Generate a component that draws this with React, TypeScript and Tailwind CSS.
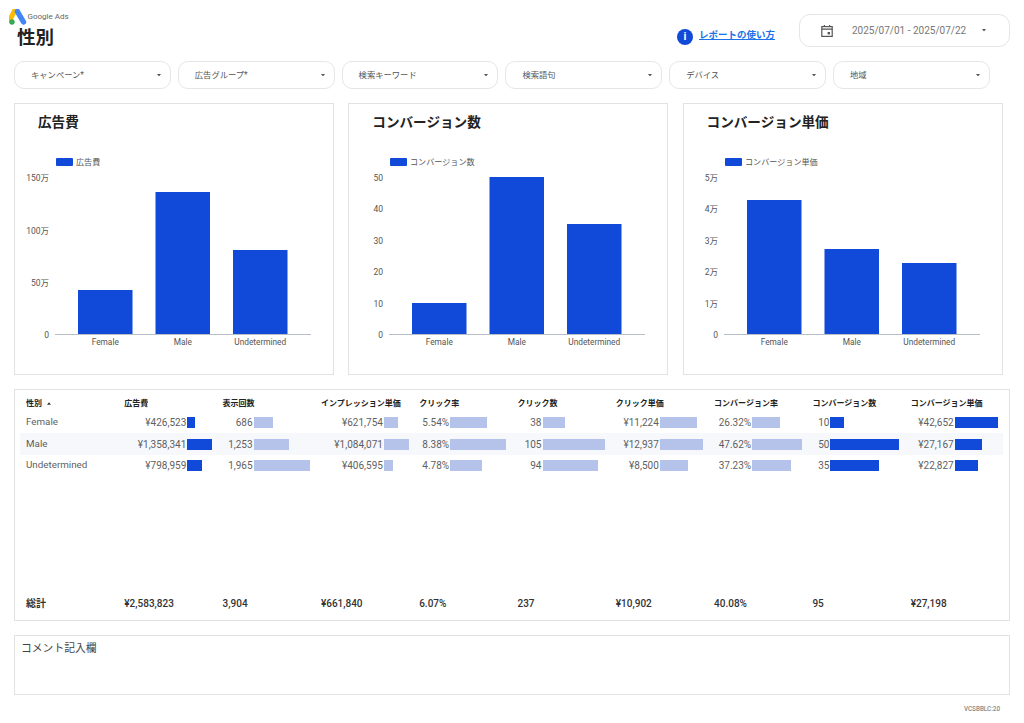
const filters = ["キャンペーン*", "広告グループ*", "検索キーワード", "検索語句", "デバイス", "地域"];

const Caret = () => (
  <svg width="4" height="2.5" viewBox="0 0 5 3" className="shrink-0">
    <path d="M0 0h5L2.5 3z" fill="#555" />
  </svg>
);

type ChartProps = {
  title: string;
  ticks: [string, number][];
  tops: number[];
};

const names = ["Female", "Male", "Undetermined"];
const barX = [64, 141.5, 219];

function Chart({ title, ticks, tops }: ChartProps) {
  return (
    <div className="w-[320px] h-[272px] border border-[#e2e2e2] bg-white">
      <div className="pl-[23px] pt-[8px] h-[46px] text-[13.6px] leading-[20px] font-bold text-[#222]">{title}</div>
      <svg width="318" height="224" viewBox="1 0 318 224" className="block">
        <rect x="42" y="8" width="17" height="8" rx="1" fill="#1149d9" />
        <text x="62" y="15" fontSize="8.1" fill="#555">{title}</text>
        {ticks.map(([label, y]) => (
          <text key={label} x="35" y={y - 150 + 4} fontSize="8.5" fill="#555" textAnchor="end">{label}</text>
        ))}
        {tops.map((top, i) => (
          <rect key={names[i]} x={barX[i]} y={top - 150} width="54.5" height={334 - top} fill="#1149d9" />
        ))}
        <line x1="41" x2="297" y1="184.5" y2="184.5" stroke="#b8bec8" strokeWidth="1" />
        {names.map((n, i) => (
          <text key={n} x={barX[i] + 27.25} y="195" fontSize="8.3" fill="#555" textAnchor="middle">{n}</text>
        ))}
      </svg>
    </div>
  );
}

type Col = {
  head: string;
  textW: string;
  dark: boolean;
  barMax: number;
  nums: number[];
  vals: string[];
  total: string;
};

const cols: Col[] = [
  { head: "広告費", textW: "w-[63px]", dark: true, barMax: 25, nums: [426523, 1358341, 798959], vals: ["¥426,523", "¥1,358,341", "¥798,959"], total: "¥2,583,823" },
  { head: "表示回数", textW: "w-[31px]", dark: false, barMax: 56, nums: [686, 1253, 1965], vals: ["686", "1,253", "1,965"], total: "3,904" },
  { head: "インプレッション単価", textW: "w-[63px]", dark: false, barMax: 25, nums: [621754, 1084071, 406595], vals: ["¥621,754", "¥1,084,071", "¥406,595"], total: "¥661,840" },
  { head: "クリック率", textW: "w-[31px]", dark: false, barMax: 56, nums: [5.54, 8.38, 4.78], vals: ["5.54%", "8.38%", "4.78%"], total: "6.07%" },
  { head: "クリック数", textW: "w-[25px]", dark: false, barMax: 62, nums: [38, 105, 94], vals: ["38", "105", "94"], total: "237" },
  { head: "クリック単価", textW: "w-[44px]", dark: false, barMax: 43, nums: [11224, 12937, 8500], vals: ["¥11,224", "¥12,937", "¥8,500"], total: "¥10,902" },
  { head: "コンバージョン率", textW: "w-[38px]", dark: false, barMax: 50, nums: [26.32, 47.62, 37.23], vals: ["26.32%", "47.62%", "37.23%"], total: "40.08%" },
  { head: "コンバージョン数", textW: "w-[18px]", dark: true, barMax: 69, nums: [10, 50, 35], vals: ["10", "50", "35"], total: "95" },
  { head: "コンバージョン単価", textW: "w-[44px]", dark: true, barMax: 43, nums: [42652, 27167, 22827], vals: ["¥42,652", "¥27,167", "¥22,827"], total: "¥27,198" },
];

function Row({ index }: { index: number }) {
  return (
    <div className={`grid grid-cols-10 h-[21.4px] items-center text-[10px] text-[#5f5f5f] ${index === 1 ? "bg-[#f6f8fc]" : ""}`}>
      <div className="pl-[6px] text-[9.8px]">{names[index]}</div>
      {cols.map((c) => {
        const max = Math.max(...c.nums);
        return (
          <div key={c.head} className="flex items-center pl-[6px]">
            <span className={`${c.textW} shrink-0 text-right pr-[1px] whitespace-nowrap flex justify-end`}>{c.vals[index]}</span>
            <span
              className={`h-[11px] ${c.dark ? "bg-[#1149d9]" : "bg-[#b5c2ea]"}`}
              style={{ width: (c.nums[index] / max) * c.barMax }}
            />
          </div>
        );
      })}
    </div>
  );
}

export default function App() {
  return (
    <div className="relative w-[1024px] h-[723px] overflow-hidden bg-white px-[14px] font-['Roboto','Noto_Sans_CJK_JP',sans-serif]">
      <header className="flex h-[61px]">
        <div className="w-[640px] -ml-[5px] pt-[9px]">
          <div className="flex items-center h-[16px]">
            <svg width="18" height="16" viewBox="0 0 18 16">
              <path d="M5.6 1.6 1 11" stroke="#fbbc04" strokeWidth="5" strokeLinecap="round" />
              <path d="M8.4 2.5 14.5 13" stroke="#4285f4" strokeWidth="5.4" strokeLinecap="round" />
              <circle cx="3" cy="13" r="2.7" fill="#34a853" />
            </svg>
            <span className="text-[8px] text-[#666] ml-[0.5px] whitespace-nowrap">Google Ads</span>
          </div>
          <h1 className="pl-[8px] mt-[2px] text-[18.5px] leading-[22px] font-bold text-[#222]">性別</h1>
        </div>
        <div className="flex items-start">
          <div className="flex items-center mt-[28px] ml-[29px]">
            <span className="w-[16px] h-[16px] rounded-full bg-[#1149d9] flex items-center justify-center text-white text-[11px] font-bold leading-none">i</span>
            <a className="ml-[6px] mb-[3px] text-[9.5px] font-bold text-[#1a73e8] underline whitespace-nowrap">レポートの使い方</a>
          </div>
          <div className="ml-[24px] mt-[14px] w-[211px] h-[33px] border border-[#e6e6e6] rounded-[11px] flex items-center pl-[20px] pr-[23px]">
            <svg width="14" height="14" viewBox="0 0 14 14" fill="none" stroke="#555" strokeWidth="1.2">
              <rect x="1.8" y="2.6" width="10.4" height="9.8" />
              <path d="M1.8 5.2h10.4M4.4 1v2M9.6 1v2" />
              <rect x="7.6" y="8" width="2.4" height="2.4" fill="#555" stroke="none" />
            </svg>
            <span className="ml-[18px] text-[10px] text-[#777] whitespace-nowrap">2025/07/01 - 2025/07/22</span>
            <span className="ml-auto"><Caret /></span>
          </div>
        </div>
      </header>

      <div className="flex gap-[7px]">
        {filters.map((f) => (
          <div key={f} className="w-[156.8px] h-[27.5px] border border-[#e6e6e6] rounded-[10px] flex items-center justify-between pl-[16px] pr-[9px] text-[8.3px] text-[#555]">
            <span>{f}</span>
            <Caret />
          </div>
        ))}
      </div>

      <div className="flex gap-[14.3px] mt-[14.5px]">
        <Chart title="広告費" ticks={[["150万", 177], ["100万", 230], ["50万", 282], ["0", 334]]} tops={[290, 192, 250]} />
        <Chart title="コンバージョン数" ticks={[["50", 177], ["40", 208], ["30", 240], ["20", 271], ["10", 303], ["0", 334]]} tops={[303, 177, 224]} />
        <Chart title="コンバージョン単価" ticks={[["5万", 177], ["4万", 208], ["3万", 240], ["2万", 271], ["1万", 303], ["0", 334]]} tops={[200, 249, 263]} />
      </div>

      <section className="mt-[14px] w-[996px] h-[232px] border border-[#e2e2e2] pl-[5px] pr-[6px] flex flex-col">
        <div className="grid grid-cols-10 h-[21px] mt-[3px] items-center text-[8px] font-bold text-[#222] whitespace-nowrap">
          <div className="pl-[6px] flex items-center gap-[3px]">
            性別
            <svg width="4" height="3" viewBox="0 0 5 3" className="ml-[2px]"><path d="M2.5 0 5 3H0z" fill="#333" /></svg>
          </div>
          {cols.map((c) => (
            <div key={c.head} className="pl-[6px]">{c.head}</div>
          ))}
        </div>
        <div className="mt-[-2px]">
          {[0, 1, 2].map((i) => <Row key={i} index={i} />)}
        </div>
        <div className="mt-auto mb-[6.5px] grid grid-cols-10 h-[20px] items-center text-[10px] font-medium text-[#333]">
          <div className="pl-[6px] font-bold">総計</div>
          {cols.map((c) => (
            <div key={c.head} className="pl-[6px]">{c.total}</div>
          ))}
        </div>
      </section>

      <section className="mt-[14px] w-[996px] h-[60px] border border-[#e2e2e2] px-[6px] pt-[5px] text-[10.8px] leading-[16px] text-[#444]">
        コメント記入欄
      </section>

      <div className="flex justify-end pr-[10px] mt-[8px] text-[6.3px] leading-[12px] font-medium text-[#888]">VCSBBLC:20</div>
    </div>
  );
}
